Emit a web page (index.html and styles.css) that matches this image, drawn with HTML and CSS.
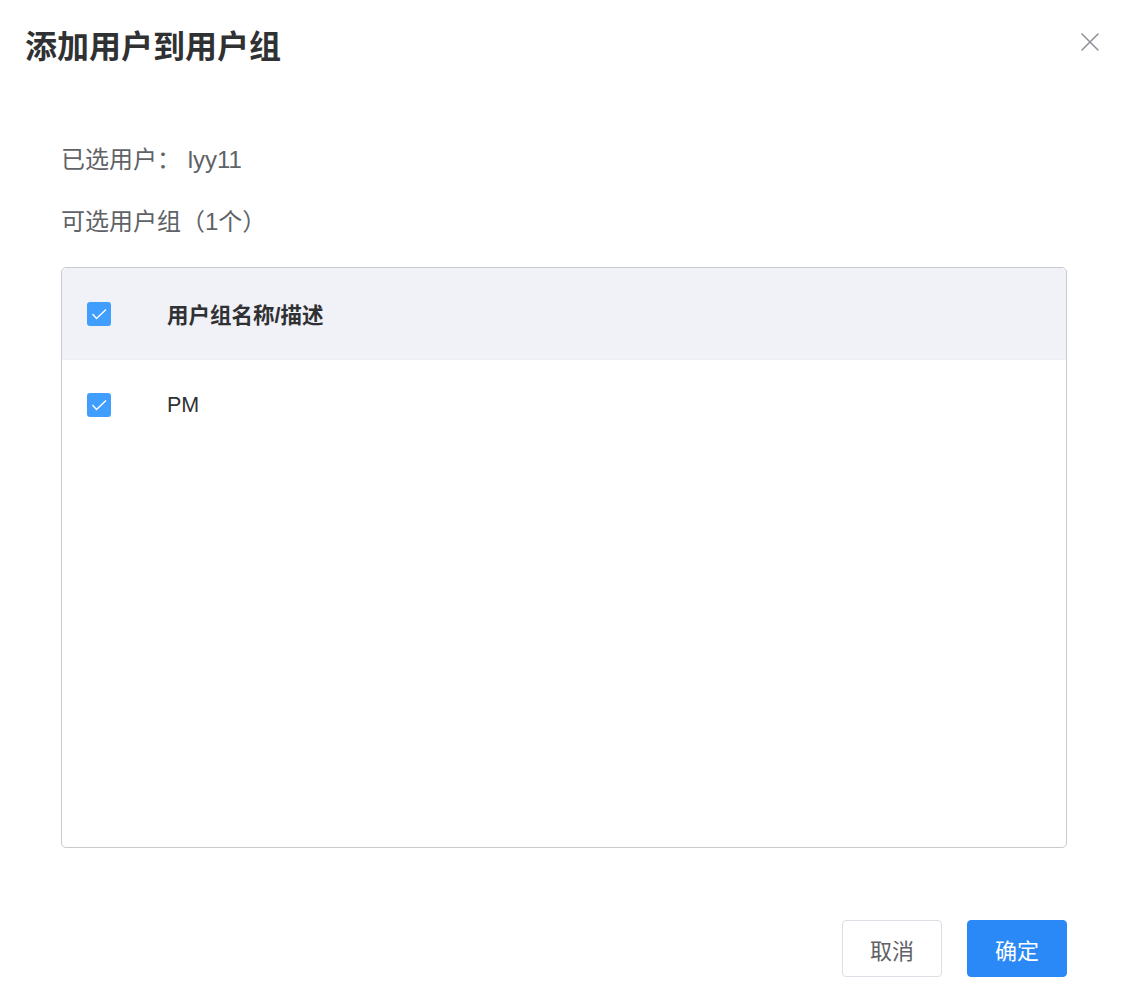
FILE: index.html
```html
<!DOCTYPE html>
<html lang="zh-CN">
<head>
<meta charset="utf-8">
<title>添加用户到用户组</title>
<link rel="stylesheet" href="styles.css">
</head>
<body>
<div class="dialog">
  <div class="header">
    <div class="title">添加用户到用户组</div>
    <svg class="close" width="18" height="18" viewBox="0 0 18 18">
      <path d="M1 1L17 17M17 1L1 17" stroke="#909399" stroke-width="1.6" fill="none" stroke-linecap="round"/>
    </svg>
  </div>
  <div class="body">
    <div class="label">已选用户： lyy11</div>
    <div class="label second">可选用户组（1个）</div>
    <div class="table">
      <div class="row head">
        <div class="cell-check"><span class="checkbox"><svg width="24" height="24" viewBox="0 0 24 24"><path d="M5.5 12L9.5 16.5L19 7.5" stroke="#fff" stroke-width="1.3" fill="none"/></svg></span></div>
        <div class="cell-text">用户组名称/描述</div>
      </div>
      <div class="row">
        <div class="cell-check"><span class="checkbox"><svg width="24" height="24" viewBox="0 0 24 24"><path d="M5.5 12L9.5 16.5L19 7.5" stroke="#fff" stroke-width="1.3" fill="none"/></svg></span></div>
        <div class="cell-text">PM</div>
      </div>
    </div>
  </div>
  <div class="footer">
    <button class="btn">取消</button>
    <button class="btn primary">确定</button>
  </div>
</div>
</body>
</html>
```
FILE: styles.css
```css
* { box-sizing: border-box; }
html, body { margin: 0; padding: 0; background: #fff; }
body {
  font-family: "Liberation Sans", "Noto Sans CJK SC", sans-serif;
  color: #303133;
}
.dialog { width: 1126px; }
.header {
  display: flex;
  justify-content: space-between;
  align-items: flex-start;
  padding: 28px 27px 0 25px;
}
.title {
  font-size: 32px;
  font-weight: bold;
  line-height: 38px;
  color: #303133;
}
.close { margin-top: 5px; display: block; }
.body { padding: 78px 59px 0 61px; }
.label {
  font-size: 24px;
  line-height: 32px;
  color: #606266;
}
.label.second { margin-top: 30px; }
.table {
  margin-top: 29px;
  height: 581px;
  border: 1px solid #c8cad0;
  border-radius: 5px;
  overflow: hidden;
}
.row {
  display: flex;
  align-items: center;
  height: 90px;
}
.row.head {
  height: 92px;
  background: #f1f2f7;
  border-bottom: 1px solid #ebeef5;
  font-weight: bold;
}
.cell-check {
  width: 105px;
  padding-left: 25px;
  display: flex;
  align-items: center;
}
.checkbox {
  width: 24px;
  height: 24px;
  border-radius: 3px;
  background: #409eff;
  display: block;
}
.checkbox svg { display: block; }
.cell-text {
  font-size: 21.5px;
  color: #303133;
}
.footer {
  display: flex;
  justify-content: flex-end;
  gap: 25px;
  padding: 72px 59px 0 0;
}
.btn {
  width: 100px;
  height: 57px;
  border: 1px solid #dcdfe6;
  border-radius: 4px;
  background: #fff;
  color: #606266;
  font-family: "Liberation Sans", "Noto Sans CJK SC", sans-serif;
  font-size: 22px;
  padding: 0;
}
.btn.primary {
  background: #2a89f6;
  border-color: #2a89f6;
  color: #fff;
}
```
